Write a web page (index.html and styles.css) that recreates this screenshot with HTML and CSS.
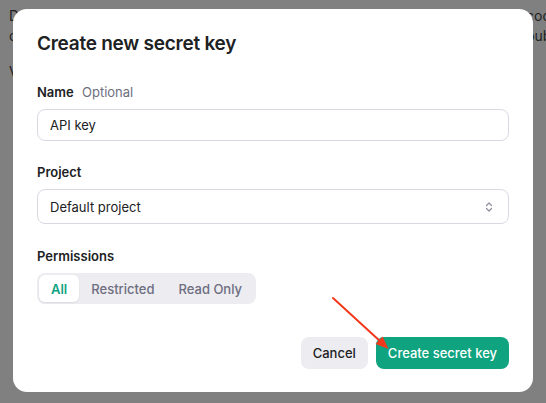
FILE: index.html
```html
<!DOCTYPE html>
<html lang="en">
<head>
<meta charset="utf-8">
<title>Create new secret key</title>
<link rel="stylesheet" href="styles.css">
</head>
<body>
<div class="page">
  <div class="bg-text">
    <span>Do not</span><span>code</span>
    <span>of</span><span>public</span>
  </div>
  <p class="bg-para">View</p>
</div>

<div class="overlay">
  <div class="modal">
    <h2 class="modal-title">Create new secret key</h2>

    <div class="field">
      <label class="label">Name <span class="label-hint">Optional</span></label>
      <div class="input"><span>API key</span></div>
    </div>

    <div class="field field-project">
      <label class="label">Project</label>
      <div class="input select">
        <span>Default project</span>
        <svg class="chevrons" width="10" height="12" viewBox="0 0 10 12" aria-hidden="true">
          <path d="M2.5 4.5 L5 2 L7.5 4.5" fill="none" stroke="#8e8ea0" stroke-width="1.2" stroke-linecap="round" stroke-linejoin="round"/>
          <path d="M2.5 7.5 L5 10 L7.5 7.5" fill="none" stroke="#8e8ea0" stroke-width="1.2" stroke-linecap="round" stroke-linejoin="round"/>
        </svg>
      </div>
    </div>

    <div class="field field-last">
      <label class="label">Permissions</label>
      <div class="segmented">
        <span class="seg seg-active">All</span>
        <span class="seg">Restricted</span>
        <span class="seg">Read Only</span>
      </div>
    </div>

    <div class="actions">
      <button class="btn btn-secondary">Cancel</button>
      <button class="btn btn-primary">Create secret key</button>
    </div>
  </div>
</div>

<svg class="annotation" width="546" height="403" viewBox="0 0 546 403" aria-hidden="true">
  <line x1="333" y1="298" x2="381" y2="342" stroke="#f2381c" stroke-width="2" stroke-linecap="round"/>
  <polygon points="388.5,349 375.6,344.1 382.6,336.6" fill="#f2381c"/>
</svg>
</body>
</html>
```

FILE: styles.css
```css
* { box-sizing: border-box; }

html, body {
  margin: 0;
  padding: 0;
  width: 546px;
  height: 403px;
  overflow: hidden;
}

body {
  background: #808080;
  font-family: Inter, "Noto Sans", "Liberation Sans", sans-serif;
  position: relative;
}

.page {
  width: 546px;
  overflow: hidden;
  padding: 6px 0 0 9px;
  color: #1f1f1f;
  font-size: 14px;
  line-height: 20px;
}

.bg-text {
  display: grid;
  grid-template-columns: 517px auto;
  white-space: nowrap;
}

.bg-para {
  margin: 16px 0 0;
  white-space: nowrap;
}

.overlay {
  position: fixed;
  inset: 0;
  padding: 9px 13px;
  display: flex;
  align-items: flex-start;
}

.modal {
  flex: 1;
  background: #ffffff;
  border-radius: 14px;
  padding: 21px 24px 23px;
  display: flex;
  flex-direction: column;
  color: #202123;
}

.modal-title {
  margin: 0 0 24px;
  font-size: 19px;
  line-height: 28px;
  font-weight: 600;
  letter-spacing: -0.25px;
}

.field {
  display: flex;
  flex-direction: column;
  gap: 7px;
  margin-bottom: 21px;
}

.field-project { margin-bottom: 22px; }

.field-last { margin-bottom: 0; }

.label {
  font-size: 13px;
  line-height: 20px;
  font-weight: 600;
}

.label-hint {
  font-weight: 400;
  color: #6e6e80;
  margin-left: 5px;
}

.input {
  height: 32px;
  border: 1px solid #d9d9e3;
  border-radius: 8px;
  padding: 0 12px;
  display: flex;
  align-items: center;
  font-size: 13px;
  color: #202123;
}

.select {
  height: 35px;
  justify-content: space-between;
  padding-right: 14px;
}

.chevrons { display: block; }

.segmented {
  align-self: flex-start;
  display: flex;
  padding: 2px;
  background: #ececf1;
  border-radius: 8px;
  height: 31px;
}

.seg {
  display: flex;
  align-items: center;
  padding: 0 12px;
  font-size: 13px;
  font-weight: 500;
  color: #6e6e80;
  border-radius: 6px;
}

.seg-active {
  background: #ffffff;
  color: #10a37f;
  font-weight: 600;
  box-shadow: 0 1px 2px rgba(0, 0, 0, 0.08);
}

.actions {
  margin-top: 33px;
  display: flex;
  justify-content: flex-end;
  gap: 8px;
}

.btn {
  height: 32px;
  border: none;
  border-radius: 8px;
  padding: 0 12px;
  font-family: inherit;
  font-size: 13px;
  font-weight: 500;
}

.btn-secondary {
  background: #ececf1;
  color: #202123;
}

.btn-primary {
  background: #10a37f;
  color: #ffffff;
}

.annotation {
  position: absolute;
  top: 0;
  left: 0;
}
```
